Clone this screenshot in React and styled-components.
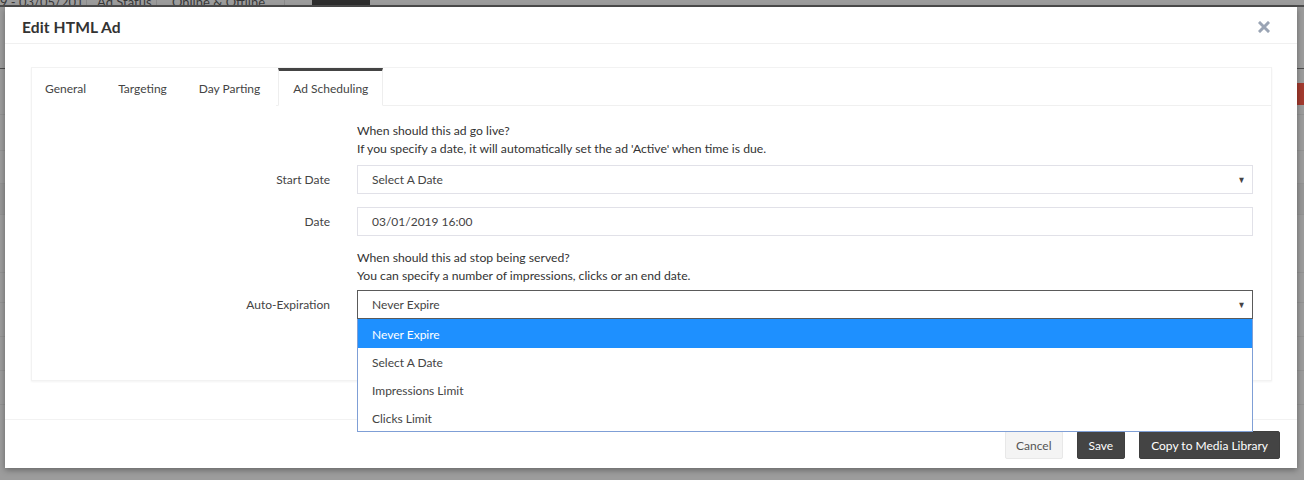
import React from "react";
import styled, { createGlobalStyle } from "styled-components";

const Global = createGlobalStyle`
  html, body { margin: 0; padding: 0; }
  body {
    width: 1304px; height: 480px; overflow: hidden;
    background: #9a9a9a;
    font-family: Lato, "Liberation Sans", sans-serif;
    color: #333;
  }
  * { box-sizing: border-box; }
`;

const Page = styled.div`
  position: relative;
  width: 1304px;
  height: 480px;
  overflow: hidden;
  background: #9c9c9c;
`;

const FilterBar = styled.div`
  display: flex;
  align-items: flex-end;
  height: 5px;
  overflow: hidden;
  font-size: 13px;
  color: #3a3a3a;
`;
const FilterItem = styled.div`
  flex: none;
  width: ${(p) => p.$w}px;
  padding-left: ${(p) => p.$pad || 0}px;
  line-height: 13px;
  margin-bottom: -4px;
  border-right: 1px solid #8a8a8a;
  white-space: nowrap;
  overflow: hidden;
`;
const FilterBtn = styled.div`
  margin-left: 27px;
  width: 58px;
  height: 8px;
  background: #2e2e2e;
`;
const DarkLine = styled.div`
  height: 2px;
  background: #4d4d4d;
`;
const BgRows = styled.div`
  display: flex;
  flex-direction: column;
`;
const BgRow = styled.div`
  height: ${(p) => p.$h}px;
  border-bottom: 1px solid ${(p) => p.$c || "#939393"};
  background: ${(p) => p.$bg || "transparent"};
  display: flex;
  justify-content: flex-end;
`;
const RedTag = styled.div`
  width: 8px;
  height: 22px;
  margin-top: 14px;
  background: #a23a2e;
`;

const Modal = styled.div`
  position: absolute;
  top: 7px;
  left: 5px;
  width: 1292px;
  height: 461px;
  background: #fff;
  box-shadow: 0 2px 6px rgba(0, 0, 0, 0.35);
  display: flex;
  flex-direction: column;
`;

const Header = styled.div`
  height: 37px;
  flex: none;
  display: flex;
  align-items: center;
  justify-content: space-between;
  padding: 4px 27px 0 17px;
  border-bottom: 1px solid #f0f0f0;
`;
const Title = styled.h4`
  margin: 0;
  font-size: 15.6px;
  font-weight: 700;
  color: #333;
  letter-spacing: 0.1px;
`;
const CloseBtn = styled.button`
  border: 0;
  background: none;
  padding: 0;
  width: 12px;
  height: 12px;
  display: flex;
  cursor: pointer;
`;

const Body = styled.div`
  flex: 1;
  padding: 23px 25px 0 26px;
  border-bottom: 1px solid #f2f2f2;
`;

const Card = styled.div`
  position: relative;
  height: 314px;
  border: 1px solid #f2f2f2;
  box-shadow: 0 1px 2px rgba(0, 0, 0, 0.05);
`;

const TabBar = styled.div`
  display: flex;
  height: 38px;
  border-bottom: 1px solid #f0f0f0;
`;
const Tab = styled.div`
  display: flex;
  align-items: center;
  padding: 0 ${(p) => (p.$active ? 14 : 15)}px 0 ${(p) => (p.$first ? 12 : p.$active ? 14 : 15)}px;
  margin-left: ${(p) => (p.$active ? 2 : 0)}px;
  font-size: 12px;
  color: #444;
  margin-bottom: -1px;
  background: #fff;
  border-top: 3px solid ${(p) => (p.$active ? "#444" : "transparent")};
  border-left: 1px solid ${(p) => (p.$active ? "#eee" : "transparent")};
  border-right: 1px solid ${(p) => (p.$active ? "#eee" : "transparent")};
  border-bottom: 1px solid ${(p) => (p.$active ? "#fff" : "transparent")};
`;

const Form = styled.div`
  display: grid;
  grid-template-columns: 298px 1fr;
  column-gap: 27px;
  align-items: center;
  padding: 16px 18px 0 0;
`;
const Help = styled.div`
  grid-column: 2;
  font-size: 12.2px;
  line-height: 18px;
  color: #333;
  margin-bottom: ${(p) => p.$mb || 0}px;
`;
const Label = styled.label`
  grid-column: 1;
  text-align: right;
  font-size: 12px;
  color: #444;
  margin-bottom: ${(p) => p.$mb || 0}px;
`;
const FieldWrap = styled.div`
  position: relative;
  grid-column: 2;
  margin-bottom: ${(p) => p.$mb || 0}px;
`;
const Field = styled.div`
  height: 29px;
  border: 1px solid ${(p) => (p.$focus ? "#5a5a5a" : "#e1e1e8")};
  display: flex;
  align-items: center;
  justify-content: space-between;
  padding: 0 6px 0 14px;
  font-size: 12px;
  color: #444;
  background: #fff;
`;
const Caret = styled.span`
  font-size: 9px;
  color: #444;
  transform: scaleX(0.9);
`;

const Dropdown = styled.ul`
  position: absolute;
  left: 0;
  right: 0;
  top: 29px;
  margin: 0;
  padding: 0;
  list-style: none;
  border: 1px solid #7f9fd6;
  border-top: 0;
  background: #fff;
  z-index: 5;
`;
const Option = styled.li`
  height: ${(p) => p.$h || 28}px;
  display: flex;
  align-items: center;
  padding: 1px 0 0 14px;
  font-size: 12px;
  color: ${(p) => (p.$selected ? "#fff" : "#444")};
  background: ${(p) => (p.$selected ? "#1e90ff" : "#fff")};
`;

const Footer = styled.div`
  height: 48px;
  flex: none;
  display: flex;
  justify-content: flex-end;
  align-items: flex-start;
  gap: 14px;
  padding: 11px 17px 0 0;
`;
const Button = styled.button`
  height: 28px;
  padding: 0 ${(p) => p.$px || 11}px;
  font-family: inherit;
  font-size: 12px;
  border-radius: 2px;
  cursor: pointer;
  border: 1px solid ${(p) => (p.$dark ? "#3f3f3f" : "#e8e8e8")};
  background: ${(p) => (p.$dark ? "#444" : "#f4f4f4")};
  color: ${(p) => (p.$dark ? "#fff" : "#555")};
`;

export default function App() {
  return (
    <>
      <Global />
      <Page>
        <FilterBar>
          <FilterItem $w={87}>9 - 03/05/201</FilterItem>
          <FilterItem $w={70} $pad={10}>Ad Status</FilterItem>
          <FilterItem $w={128} $pad={15}>Online &amp; Offline&nbsp;&nbsp;&nbsp;&nbsp;&nbsp;&nbsp;▾</FilterItem>
          <FilterBtn />
        </FilterBar>
        <DarkLine />
        <BgRows>
          <BgRow $h={62} $c="#4d4d4d" />
          <BgRow $h={46}>
            <RedTag />
          </BgRow>
          <BgRow $h={36} />
          <BgRow $h={33} />
          <BgRow $h={31} $bg="#979797" />
          <BgRow $h={58} />
          <BgRow $h={30} />
          <BgRow $h={34} />
          <BgRow $h={34} />
          <BgRow $h={34} />
        </BgRows>

        <Modal>
          <Header>
            <Title>Edit HTML Ad</Title>
            <CloseBtn aria-label="Close">
              <svg width="12" height="12" viewBox="0 0 12 12">
                <path d="M2 2 L10 10 M10 2 L2 10" stroke="#9aa4b4" strokeWidth="3" strokeLinecap="square" />
              </svg>
            </CloseBtn>
          </Header>
          <Body>
            <Card>
              <TabBar>
                <Tab $first>General</Tab>
                <Tab>Targeting</Tab>
                <Tab>Day Parting</Tab>
                <Tab $active>Ad Scheduling</Tab>
              </TabBar>
              <Form>
                <Help $mb={7}>
                  When should this ad go live?
                  <br />
                  If you specify a date, it will automatically set the ad 'Active' when time is due.
                </Help>
                <Label $mb={13}>Start Date</Label>
                <FieldWrap $mb={13}>
                  <Field>
                    <span>Select A Date</span>
                    <Caret>▼</Caret>
                  </Field>
                </FieldWrap>
                <Label $mb={13}>Date</Label>
                <FieldWrap $mb={13}>
                  <Field>
                    <span>03/01/2019 16:00</span>
                  </Field>
                </FieldWrap>
                <Help $mb={5}>
                  When should this ad stop being served?
                  <br />
                  You can specify a number of impressions, clicks or an end date.
                </Help>
                <Label>Auto-Expiration</Label>
                <FieldWrap>
                  <Field $focus>
                    <span>Never Expire</span>
                    <Caret>▼</Caret>
                  </Field>
                  <Dropdown>
                    <Option $selected $h={29}>Never Expire</Option>
                    <Option>Select A Date</Option>
                    <Option>Impressions Limit</Option>
                    <Option $h={27}>Clicks Limit</Option>
                  </Dropdown>
                </FieldWrap>
              </Form>
            </Card>
          </Body>
          <Footer>
            <Button $px={10}>Cancel</Button>
            <Button $dark>Save</Button>
            <Button $dark>Copy to Media Library</Button>
          </Footer>
        </Modal>
      </Page>
    </>
  );
}
